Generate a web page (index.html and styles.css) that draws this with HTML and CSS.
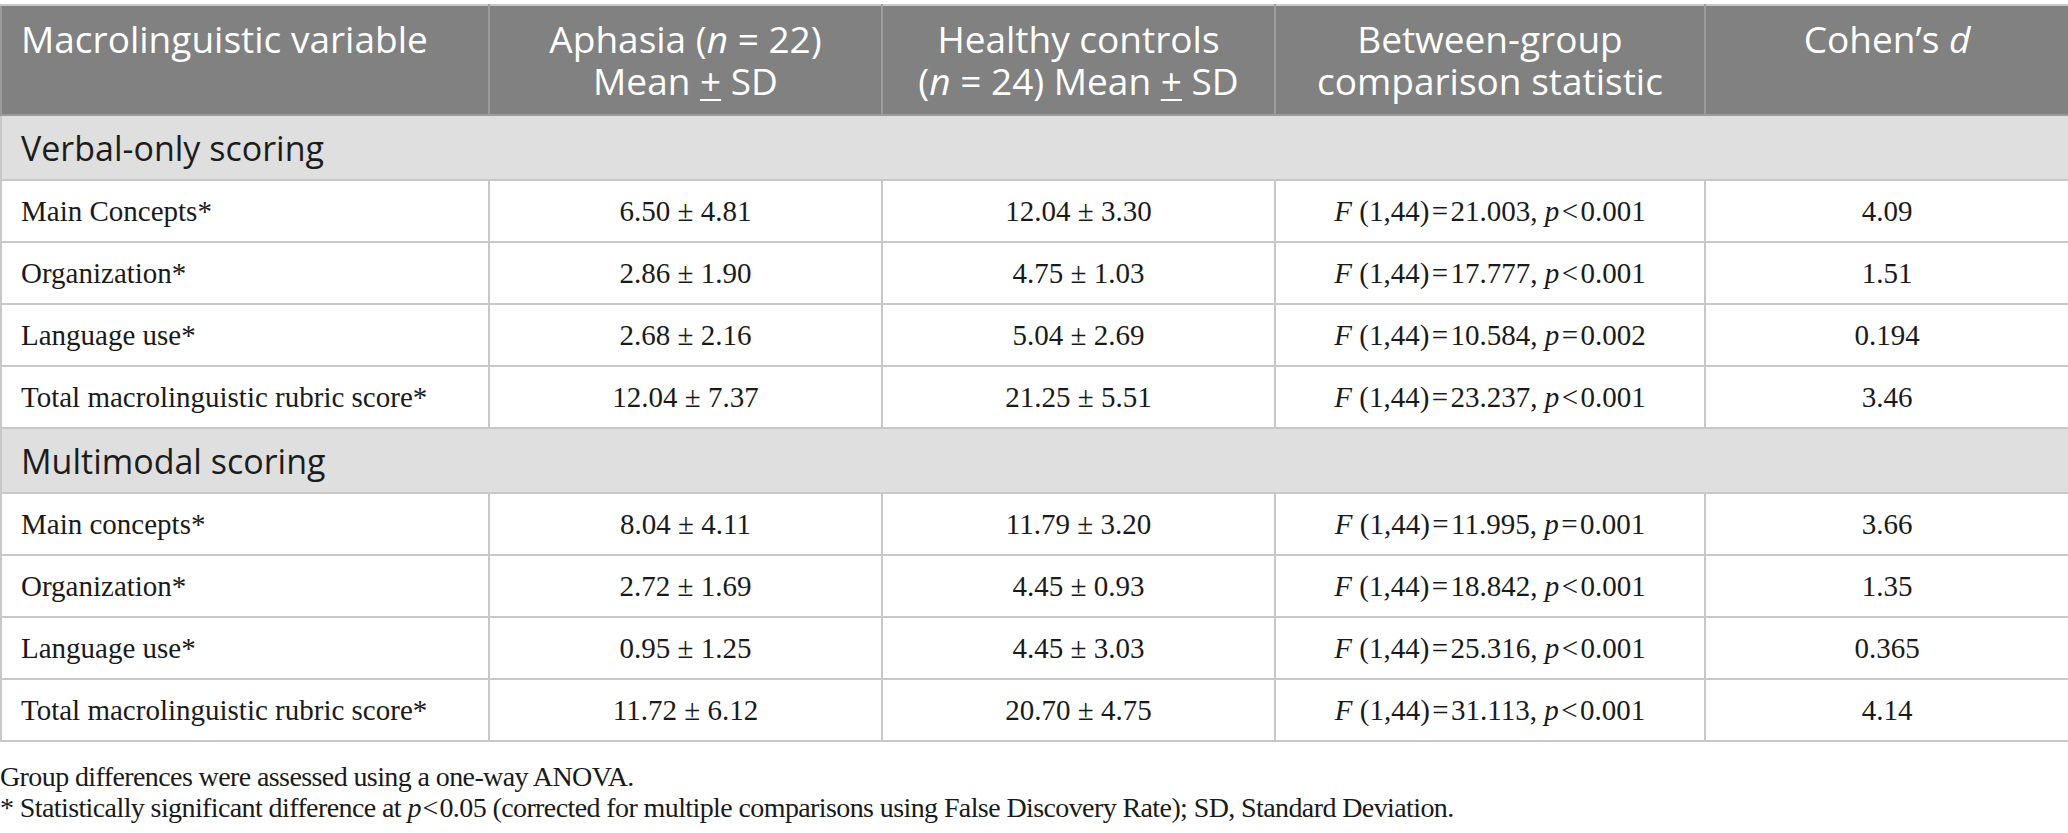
FILE: index.html
```html
<!DOCTYPE html>
<html>
<head>
<meta charset="utf-8">
<link rel="stylesheet" href="styles.css">
</head>
<body>
<table class="data">
  <colgroup>
    <col class="c1"><col class="c2"><col class="c3"><col class="c4"><col class="c5">
  </colgroup>
  <thead>
    <tr class="head">
      <th class="left">Macrolinguistic variable</th>
      <th>Aphasia (<i>n</i> = 22)<br>Mean <u>+</u> SD</th>
      <th>Healthy controls<br>(<i>n</i> = 24) Mean <u>+</u> SD</th>
      <th>Between-group<br>comparison statistic</th>
      <th>Cohen’s <i>d</i></th>
    </tr>
  </thead>
  <tbody>
    <tr class="section"><td colspan="5">Verbal-only scoring</td></tr>
    <tr><td class="left">Main Concepts*</td><td>6.50 ± 4.81</td><td>12.04 ± 3.30</td><td><i>F</i> (1,44)&#8202;=&#8202;21.003, <i>p</i>&#8202;&lt;&#8202;0.001</td><td>4.09</td></tr>
    <tr><td class="left">Organization*</td><td>2.86 ± 1.90</td><td>4.75 ± 1.03</td><td><i>F</i> (1,44)&#8202;=&#8202;17.777, <i>p</i>&#8202;&lt;&#8202;0.001</td><td>1.51</td></tr>
    <tr><td class="left">Language use*</td><td>2.68 ± 2.16</td><td>5.04 ± 2.69</td><td><i>F</i> (1,44)&#8202;=&#8202;10.584, <i>p</i>&#8202;=&#8202;0.002</td><td>0.194</td></tr>
    <tr><td class="left">Total macrolinguistic rubric score*</td><td>12.04 ± 7.37</td><td>21.25 ± 5.51</td><td><i>F</i> (1,44)&#8202;=&#8202;23.237, <i>p</i>&#8202;&lt;&#8202;0.001</td><td>3.46</td></tr>
    <tr class="section"><td colspan="5">Multimodal scoring</td></tr>
    <tr><td class="left">Main concepts*</td><td>8.04 ± 4.11</td><td>11.79 ± 3.20</td><td><i>F</i> (1,44)&#8202;=&#8202;11.995, <i>p</i>&#8202;=&#8202;0.001</td><td>3.66</td></tr>
    <tr><td class="left">Organization*</td><td>2.72 ± 1.69</td><td>4.45 ± 0.93</td><td><i>F</i> (1,44)&#8202;=&#8202;18.842, <i>p</i>&#8202;&lt;&#8202;0.001</td><td>1.35</td></tr>
    <tr><td class="left">Language use*</td><td>0.95 ± 1.25</td><td>4.45 ± 3.03</td><td><i>F</i> (1,44)&#8202;=&#8202;25.316, <i>p</i>&#8202;&lt;&#8202;0.001</td><td>0.365</td></tr>
    <tr><td class="left">Total macrolinguistic rubric score*</td><td>11.72 ± 6.12</td><td>20.70 ± 4.75</td><td><i>F</i> (1,44)&#8202;=&#8202;31.113, <i>p</i>&#8202;&lt;&#8202;0.001</td><td>4.14</td></tr>
  </tbody>
</table>
<div class="notes">
  <p>Group differences were assessed using a one-way ANOVA.</p>
  <p>* Statistically significant difference at <i>p</i>&#8202;&lt;&#8202;0.05 (corrected for multiple comparisons using False Discovery Rate); SD, Standard Deviation.</p>
</div>
</body>
</html>
```
FILE: styles.css
```css
html, body {
  margin: 0;
  padding: 0;
  background: #ffffff;
}

body {
  padding-top: 4px;
}

.data {
  width: 2068px;
  border-collapse: collapse;
  table-layout: fixed;
}

.c1 { width: 488px; }
.c2 { width: 393px; }
.c3 { width: 393px; }
.c4 { width: 430px; }
.c5 { width: 364px; }

.data th,
.data td {
  border: 2px solid #c8c8c8;
  text-align: center;
}

.head th {
  height: 110px;
  box-sizing: border-box;
  background: #808180;
  color: #ffffff;
  font-family: "Open Sans", "Noto Sans", sans-serif;
  font-weight: 400;
  font-size: 37px;
  line-height: 42px;
  vertical-align: top;
  padding: 12px 6px 0;
  white-space: nowrap;
  border-color: #9c9c9c;
  border-top-color: #c8c8c8;
}

.head th u {
  text-decoration-thickness: 2px;
  text-underline-offset: 4px;
}

.data .left {
  text-align: left;
  padding-left: 19px;
}

.section td {
  height: 65px;
  box-sizing: border-box;
  background: #e0dfe0;
  text-align: left;
  padding: 0 0 0 19px;
  font-family: "Open Sans", "Noto Sans", sans-serif;
  font-size: 34px;
  color: #1c1c1c;
}

.data tbody tr:not(.section) td {
  height: 62px;
  box-sizing: border-box;
  padding-top: 0;
  padding-bottom: 0;
  font-family: "Liberation Serif", "Times New Roman", serif;
  font-size: 29px;
  color: #1a1a1a;
}

.notes {
  margin-top: 19px;
  font-family: "Liberation Serif", "Times New Roman", serif;
  font-size: 28px;
  line-height: 31px;
  color: #1a1a1a;
  letter-spacing: -0.6px;
}

.notes p {
  margin: 0;
}
```
